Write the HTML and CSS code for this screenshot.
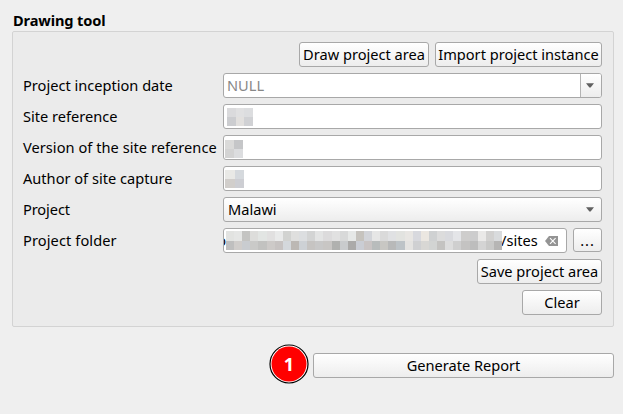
FILE: index.html
```html
<!DOCTYPE html>
<html lang="en">
<head>
<meta charset="utf-8">
<title>Drawing tool</title>
<link rel="stylesheet" href="styles.css">
</head>
<body>
<main class="panel">
  <h1 class="title">Drawing tool</h1>
  <section class="group">
    <div class="actions">
      <button class="btn draw">Draw project area</button>
      <button class="btn import">Import project instance</button>
    </div>
    <div class="row"><label>Project inception date</label>
      <div class="field date"><span class="null">NULL</span><span class="drop"><svg class="arrow" width="8" height="5" viewBox="0 0 8 5"><path d="M0 .3h8L4.6 4.5H3.4z"/></svg></span></div></div>
    <div class="row"><label>Site reference</label>
      <div class="field"><svg class="m-site" width="26" height="18" shape-rendering="crispEdges"><path fill="#dadadc" d="M0 0h9v9H0z"/><path fill="#e0e0e1" d="M9 0h8v9H9z"/><path fill="#dcdddf" d="M17 0h9v9h-9z"/><path fill="#cccdd0" d="M0 9h9v9H0z"/><path fill="#e2e0de" d="M9 9h8v9H9z"/><path fill="#d0d1d4" d="M17 9h9v9h-9z"/></svg></div></div>
    <div class="row"><label class="t-version">Version of the site reference</label>
      <div class="field"><svg class="m-version" width="18" height="18" shape-rendering="crispEdges"><path fill="#dadad9" d="M0 0h9v9H0z"/><path fill="#c5c6c8" d="M9 0h9v9H9z"/><path fill="#d3d3d3" d="M0 9h9v9H0z"/><path fill="#dcdddf" d="M9 9h9v9H9z"/></svg></div></div>
    <div class="row"><label>Author of site capture</label>
      <div class="field"><svg class="m-author" width="19" height="18" shape-rendering="crispEdges"><path fill="#e9e9e6" d="M0 0h10v9H0z"/><path fill="#d5d9dd" d="M10 0h9v9h-9z"/><path fill="#d1cecb" d="M0 9h10v9H0z"/><path fill="#cdced3" d="M10 9h9v9h-9z"/></svg></div></div>
    <div class="row"><label class="t-project">Project</label>
      <div class="field select"><span>Malawi</span><svg class="arrow" width="8" height="5" viewBox="0 0 8 5"><path d="M0 .3h8L4.6 4.5H3.4z"/></svg></div></div>
    <div class="row"><label class="t-folder">Project folder</label>
      <div class="field"><span class="clip">o</span><svg class="mosaic" id="path-mosaic" width="276" height="19" shape-rendering="crispEdges"></svg><span class="sites">/sites</span><svg class="erase" width="13" height="10" viewBox="0 0 13 10"><path fill="#949494" d="M4 0h9v10H4L0 5z"/><path stroke="#fff" stroke-width="1.1" d="M5 2.2 10.6 7.8M10.6 2.2 5 7.8"/></svg></div>
      <button class="btn more">...</button></div>
    <div class="actions"><button class="btn save">Save project area</button></div>
    <div class="actions"><button class="btn clear">Clear</button></div>
  </section>
  <footer class="footer">
    <svg class="step" width="40" height="40" viewBox="0 0 40 40"><circle cx="20" cy="20" r="19" fill="#fff" stroke="#000" stroke-width="1.2"/><circle cx="20" cy="20" r="17.5" fill="#f00"/><text x="20" y="26.5" text-anchor="middle">1</text></svg>
    <button class="btn generate">Generate Report</button>
  </footer>
</main>
<script src="mosaic.js"></script>
</body>
</html>
```
FILE: styles.css
```css
* { box-sizing: border-box; }
body { margin: 0; background: #efefef; color: #000; font: 14.6px/23px "Noto Sans", sans-serif; }
.panel { width: 623px; height: 414px; padding: 10px 9px 0 12px; overflow: hidden; }
.title { margin: 0; height: 21px; font-size: 14.6px; line-height: 21px; font-weight: 700; letter-spacing: -.12px; padding-left: 1px; }
.group { width: 602px; height: 296px; padding: 10px 11px 0 10px; border: 1px solid #d3d3d3; border-radius: 2px; background: #ebebeb; display: flex; flex-direction: column; gap: 6px; }
.actions { display: flex; justify-content: flex-end; gap: 6px; height: 25px; }
.row { display: flex; height: 25px; }
label { width: 200px; flex: none; line-height: 25px; white-space: nowrap; }
.t-version { letter-spacing: .04px; }
.t-project { letter-spacing: -.1px; }
.t-folder { letter-spacing: .1px; }
.field { flex: 1; min-width: 0; height: 25px; border: 1px solid #a8a8a8; border-radius: 3px; background: #fff; display: flex; align-items: center; overflow: hidden; }
.btn { height: 25px; padding: 0; border: 1px solid #a8a8a8; border-radius: 3px; background: linear-gradient(#fff, #ededed); color: #000; font: inherit; line-height: 23px; text-align: center; white-space: nowrap; display: flex; justify-content: center; }
.draw { width: 130px; }
.import { width: 167px; }
.save { width: 125px; }
.clear { width: 80px; }
.more { width: 29px; height: 24px; margin-left: 6px; letter-spacing: 1px; }
.date { justify-content: space-between; }
.null { margin-left: 3px; color: #888; }
.drop { width: 21px; height: 23px; border-left: 1px solid #b4b4b4; background: linear-gradient(#fff, #ededed); display: flex; align-items: center; justify-content: center; padding-right: 3px; }
.arrow { fill: #606060; flex: none; }
.select { background: linear-gradient(#fff, #ededed); justify-content: space-between; padding: 0 7px 0 4px; }
.mosaic { flex: none; position: relative; }
.m-site { margin-left: 3px; }
.m-version { margin: 3px 0 0 1px; }
.m-author { margin: 0 0 0 1px; }
.clip { width: 2px; flex: none; display: flex; justify-content: flex-end; overflow: hidden; }
.sites { margin-left: -1px; }
.erase { margin-left: auto; margin-right: 8px; flex: none; }
.footer { display: flex; height: 40px; margin-top: 17px; align-items: flex-start; }
.step { margin-left: 257px; flex: none; }
.step text { fill: #fff; font: 700 18px "Noto Sans", sans-serif; }
.generate { width: 301px; margin: 9px 0 0 4px; }
```
FILE: mosaic.js
```js
const rows = [
  "e2e3e1 e5e6e5 c4c4c2 dddddb e2e5e3 e1e0e0 e9eaea d2d3d1 dfdfde dcdee0 d3d4d4 e3e4e4 dcdbdc e1e1e1 d8d9d9 e6e8e7 c6c3be d2d4d9 e6e6e6 dadada e0e1e3 e2e3e0 e8e6e3 d8d9de ebe7e1 cfd1d2 dcdcdc d9dade e4e5e8 cecdcc cccccd eae9e8 d2d1d0 d9dbdd",
  "bfbfbf d0cdcb c9ccd0 cacac8 c2c2c0 cdcac8 c7c3c2 d4d8dc bcb8b4 cdd1d5 c6c4c2 c8c8c8 c8c6c4 b0b1af c9cbcd abaaa9 cacdd4 c9c4c4 b8bcbc c8c7c3 b8b9b9 bdc3c7 e4e3e1 cfd0d2 d8d7d4 d2d4d3 c4c3c1 dddddd cfcfcf c4c3c2 bdbdbd d4d4d4 c9c9c8 b6b5b4"
];
const svg = document.getElementById("path-mosaic");
rows.forEach((row, r) => row.split(" ").forEach((color, i) => {
  const cell = document.createElementNS("http://www.w3.org/2000/svg", "rect");
  const x = Math.round(i * 276 / 34);
  cell.setAttribute("x", x);
  cell.setAttribute("y", r * 10);
  cell.setAttribute("width", Math.round((i + 1) * 276 / 34) - x);
  cell.setAttribute("height", r ? 9 : 10);
  cell.setAttribute("fill", "#" + color);
  svg.append(cell);
}));
```
